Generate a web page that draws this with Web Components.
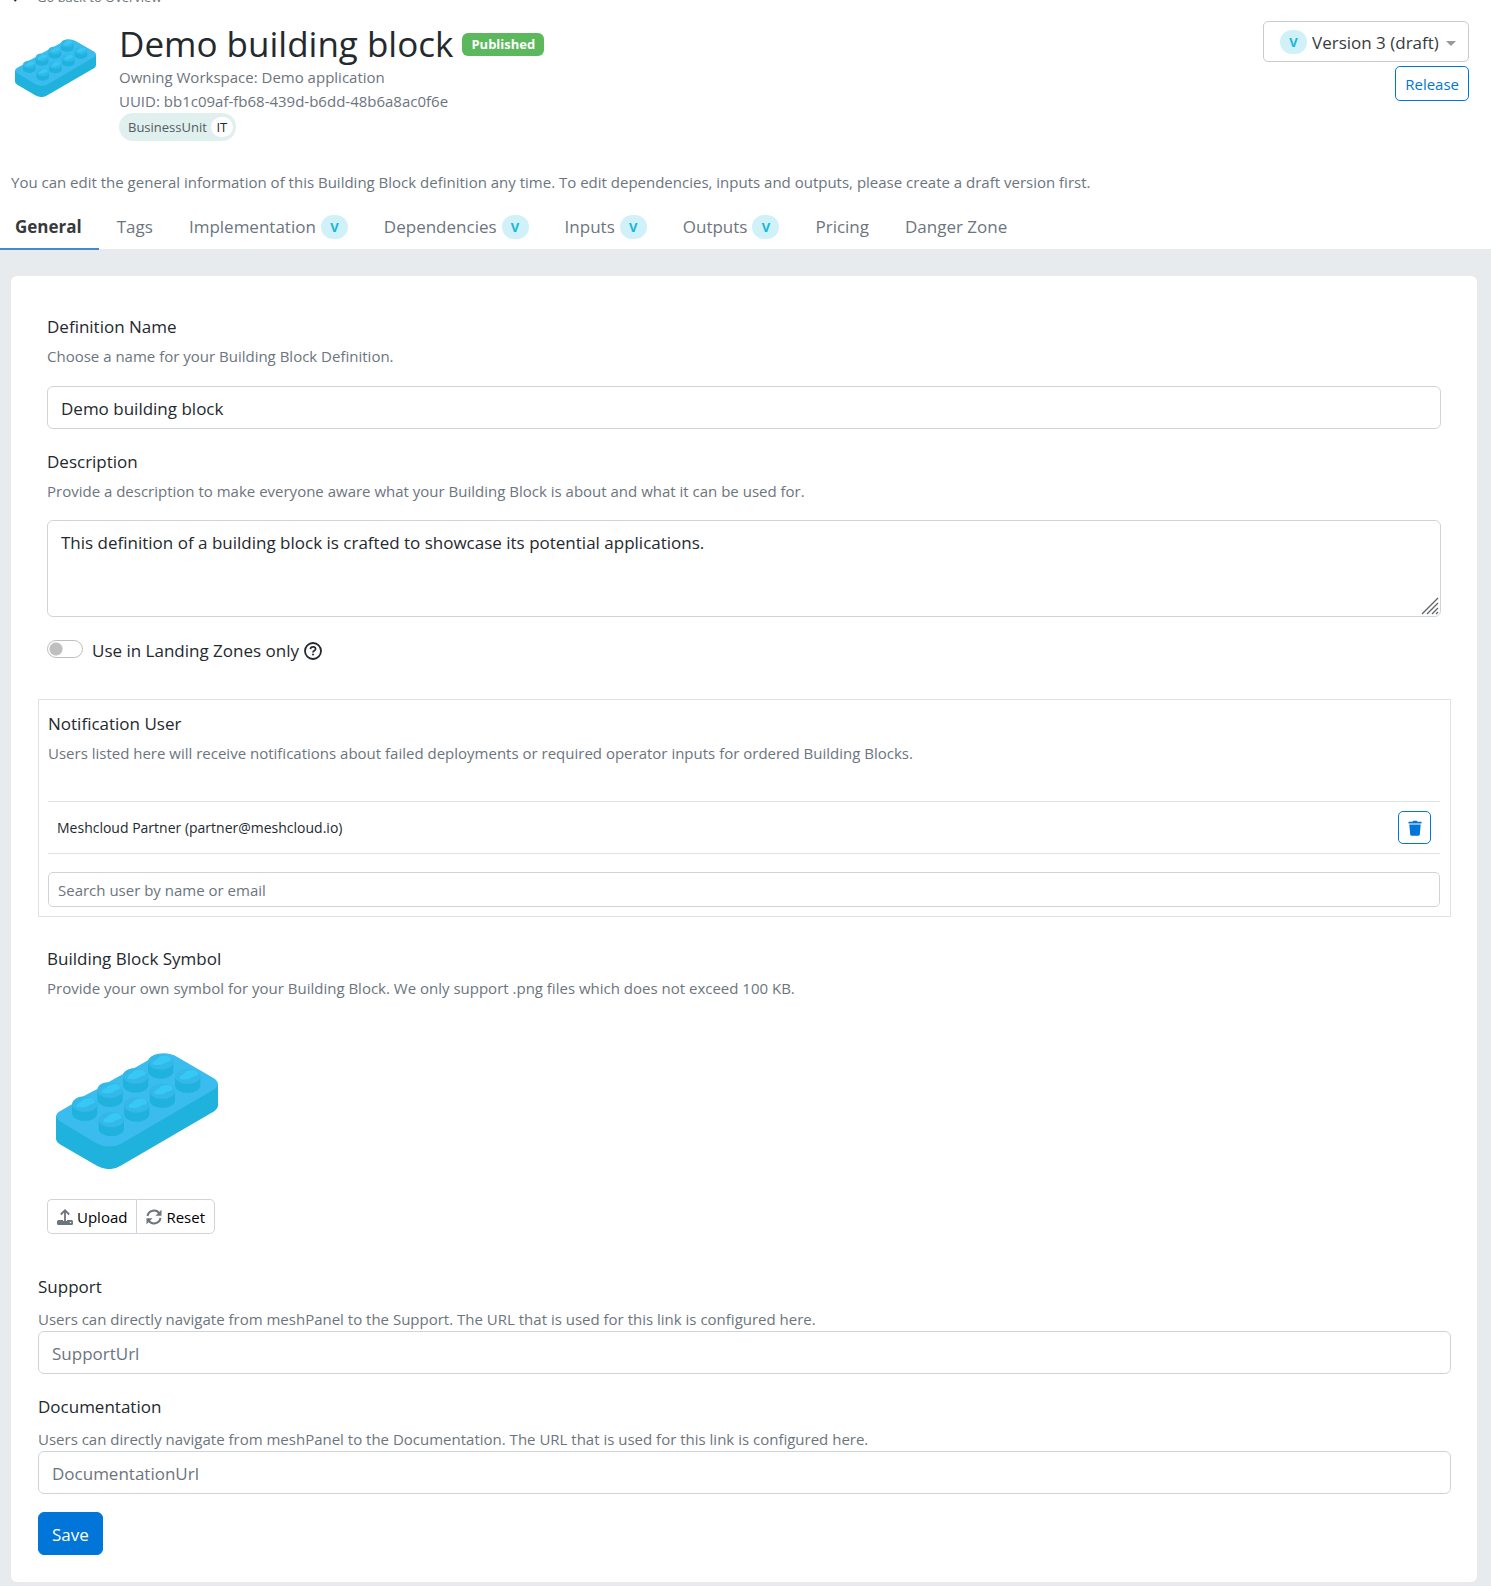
<!DOCTYPE html>
<html lang="en">
<head>
<meta charset="utf-8">
<title>Demo building block</title>
<style>
  html { background: #e7ebee; }
  body {
    margin: 0;
    font: 15px/24px "Open Sans", "Noto Sans", sans-serif;
    color: #24292e;
    overflow-x: hidden;
  }
</style>
</head>
<body>
<building-block-page></building-block-page>

<script>
const base = `
  *, *::before, *::after { box-sizing: border-box; }
  :host { display: block; }
  button, input, textarea, select { font: inherit; color: inherit; margin: 0; }
  h1, h2, p { margin: 0; font-weight: 400; }
  svg { display: block; }
`;

function define(name, render) {
  customElements.define(name, class extends HTMLElement {
    connectedCallback() {
      if (this.shadowRoot) return;
      const root = this.attachShadow({ mode: "open" });
      const tpl = document.createElement("template");
      tpl.innerHTML = render(this);
      root.append(tpl.content.cloneNode(true));
    }
  });
}
const attr = (el, n) => el.getAttribute(n) || "";

/* Building block symbol */
define("brick-symbol", () => {
  const studs = [[482,397],[407,439],[563,440],[330,482],[487,485],[254,524],[410,526],[334,570]];
  const stud = ([x, y]) => `
    <path fill="#1fb2dc" d="M${x-38} ${y}v27a38 23 0 0 0 76 0v-27z"/>
    <ellipse fill="#34b8e9" cx="${x}" cy="${y}" rx="38" ry="23"/>
    <path fill="#35c9f3" d="M${x-24} ${y+5}c-1-9 10-9 15-16 6-8 20-10 30-7 5 2 8 5 10 9 1 6-8 8-14 10-8 3-13 9-24 8-8-1-16 2-17-4z"/>`;
  return `<style>${base} svg { width: 100%; height: auto; }</style>
  <svg viewBox="168 370 486 349" aria-hidden="true">
    <path fill="#1fb2dc" d="M168 558V627Q168 636 182 645L292 709Q330 728 362 708L644 544Q654 536 654 528V462L330 600Z"/>
    <path fill="#3abdee" d="M182 543L217 523Q220 503 250 500L292 478Q296 459 326 457L368 434Q378 417 402 416L444 392Q456 371 490 371Q514 371 532 382L644 447Q664 462 644 478L362 643Q328 659 292 642L182 576Q155 558 182 543Z"/>
    ${studs.map(stud).join("")}
  </svg>`;
});

/* Round marker for versioned content */
define("version-mark", () => `<style>${base}
  :host { display: inline-flex; align-items: center; justify-content: center;
    width: 27px; height: 24px; border-radius: 12px; background: #d0f1f8;
    color: #17b6dc; font-size: 13px; line-height: 24px; font-weight: 700; flex: none; }
</style><span>V</span>`);

define("status-badge", () => `<style>${base}
  :host { background: #5cb85c; color: #fff; border-radius: 6px; padding: 0 9px;
    font-size: 13px; line-height: 23px; font-weight: 700; }
</style><slot></slot>`);

define("tag-pill", el => `<style>${base}
  :host { display: inline-flex; align-items: center; gap: 4px; height: 28px; padding: 0 3px 0 9px;
    border-radius: 14px; background: #dff0ee; color: #555b60; font-size: 13px; line-height: 20px; }
  b { font-weight: 400; color: #24292e; background: #fff; border-radius: 10px; min-width: 22px; text-align: center; }
</style><span>${attr(el, "name")}</span><b><slot></slot></b>`);

define("app-button", el => `<style>${base}
  :host { display: inline-block; }
  button { display: flex; align-items: center; gap: 4px; height: 35px; padding: 0 9px;
    border: 1px solid #0275d8; border-radius: 5px; background: #fff; color: #0275d8;
    font-size: 15px; line-height: 24px; white-space: nowrap; cursor: pointer; }
  :host([kind="primary"]) button { height: 43px; padding: 2px 13px 0; border-radius: 6px;
    background: #0275d8; color: #fff; font-size: 17px; }
  :host([kind="icon"]) button { width: 33px; height: 33px; padding: 0; justify-content: center; }
  :host([kind="start"]) button, :host([kind="end"]) button { border-color: #ced4da; color: #000; }
  :host([kind="start"]) button { border-radius: 5px 0 0 5px; border-right: 0; }
  :host([kind="end"]) button { border-radius: 0 5px 5px 0; }
</style>
<button type="button"${attr(el, "label") ? ` aria-label="${attr(el, "label")}"` : ""}><slot></slot></button>`);

define("version-select", () => `<style>${base}
  :host { display: flex; align-items: center; width: 206px; height: 41px; padding: 0 12px 0 16px;
    border: 1px solid #c9cbcd; border-radius: 5px; background: #fff; color: #373a3c; }
  select { appearance: none; flex: 1; min-width: 0; border: 0; background: none; outline: 0;
    padding: 2px 0 0 5px; font-size: 17px; line-height: 28px; height: 30px; }
  svg { margin-top: 4px; }
</style>
<version-mark></version-mark>
<select aria-label="Version"><option>Version 3 (draft)</option></select>
<svg width="10" height="5" viewBox="0 0 10 5"><path fill="#999" d="M0 0h10L5 5z"/></svg>`);

define("page-header", () => `<style>${base}
  :host { background: #fff; color: #6c757d; }
  .back { display: flex; align-items: center; gap: 19px; margin-top: -15px; padding-left: 10px;
    color: inherit; text-decoration: none; font-size: 13px; }
  .row { display: flex; align-items: flex-start; padding: 12px 22px 0 15px; }
  brick-symbol { width: 81px; margin: 18px 23px 0 0; flex: none; }
  .info { flex: 1; min-width: 0; }
  .title { display: flex; align-items: center; gap: 9px; height: 44px; padding-top: 2px; }
  h1 { font-size: 35px; line-height: 44px; color: #24292e; }
  .actions { display: flex; flex-direction: column; align-items: flex-end; gap: 4px; }
  tag-pill { vertical-align: top; }
  .note { padding: 29px 11px 0; }
</style>
<a class="back" href="#overview">
  <svg width="8" height="10" viewBox="0 0 8 10"><path d="M6 1L2 5l4 4" fill="none" stroke="#24292e" stroke-width="2"/></svg>
  <span>Go back to Overview</span></a>
<div class="row">
  <brick-symbol></brick-symbol>
  <div class="info">
    <div class="title"><h1>Demo building block</h1><status-badge>Published</status-badge></div>
    <p>Owning Workspace: Demo application</p>
    <p>UUID: bb1c09af-fb68-439d-b6dd-48b6a8ac0f6e</p>
    <tag-pill name="BusinessUnit">IT</tag-pill>
  </div>
  <div class="actions"><version-select></version-select><app-button>Release</app-button></div>
</div>
<p class="note">You can edit the general information of this Building Block definition any time. To edit dependencies, inputs and outputs, please create a draft version first.</p>`);

define("tab-link", el => `<style>${base}
  a { display: flex; align-items: center; gap: 5px; height: 37px; padding: 0 18px 9px;
    font-size: 17px; line-height: 28px; color: #6c757d; text-decoration: none; white-space: nowrap; }
  :host([active]) a { padding: 0 17px 7px 15px; font-weight: 700; color: #373a3c;
    border-bottom: 2px solid #428bca; }
</style>
<a href="#${attr(el, "to")}"${el.hasAttribute("active") ? ' aria-current="page"' : ""}><slot></slot>${el.hasAttribute("versioned") ? "<version-mark></version-mark>" : ""}</a>`);

define("tab-bar", () => `<style>${base}
  :host { background: #fff; padding-top: 19px; height: 55px; }
  nav { display: flex; }
</style><nav><slot></slot></nav>`);

/* Label, hint and a text control */
define("form-field", el => {
  const area = el.hasAttribute("multiline");
  const hint = attr(el, "hint");
  return `<style>${base}
  label { display: block; font-size: 17px; line-height: 30px; }
  p { color: #6c757d; margin: 2px 0 18px; }
  :host([multiline]) p { margin-bottom: 17px; }
  :host([tight]) p { margin: 5px 0 0; }
  input, textarea { display: block; width: 100%; border: 1px solid #ced4da; border-radius: 6px; background: #fff;
    padding: 2px 13px 0; font-size: 17px; line-height: 28px; outline: 0; }
  input { height: 43px; }
  ::placeholder { color: #6c757d; opacity: 1; }
  .area { display: grid; position: relative; }
  textarea { height: 97px; padding-top: 8px; resize: none; }
  .grip { position: absolute; right: 2px; bottom: 2px; }
</style>
<label for="c">${attr(el, "label")}</label>
<p id="h">${hint}</p>
${area
  ? `<div class="area"><textarea id="c" aria-describedby="h">${attr(el, "value")}</textarea>
     <svg class="grip" width="18" height="18" viewBox="0 0 18 18"><path d="M1 17L17 1M6 17L17 6M11 17l6-6M15 17l2-2" stroke="#5f6368" stroke-width="1.3"/></svg></div>`
  : `<input id="c" type="text" aria-describedby="h" value="${attr(el, "value")}" placeholder="${attr(el, "placeholder")}">`}`;
});

define("toggle-switch", () => `<style>${base}
  :host { display: flex; align-items: center; gap: 5px; font-size: 17px; line-height: 28px; }
  label { display: flex; align-items: center; gap: 9px; }
  input { appearance: none; width: 36px; height: 18px; margin: 0 0 4px; border: 1px solid #bfbfbf; border-radius: 9px;
    background: radial-gradient(circle at 8px 8px, #bfbfbf 6px, transparent 7px) #fff; }
</style>
<label><input type="checkbox" role="switch"><span><slot></slot></span></label>
<svg width="18" height="18" viewBox="0 0 18 18"><circle cx="9" cy="9" r="8" fill="none" stroke="#24292e" stroke-width="1.8"/>
<path d="M6.4 7.1c.1-1.500 1.100-2.200 2.600-2.200 1.500 0 2.600.8 2.600 2.100 0 1.900-2.600 1.700-2.600 3.400" fill="none" stroke="#24292e" stroke-width="1.700"/><rect x="8" y="11.600" width="2" height="2" rx="1" fill="#24292e"/></svg>`);

define("notification-users", () => `<style>${base}
  :host { border: 1px solid #dee2e6; padding: 9px 10px 9px 9px; }
  h2 { font-size: 17px; line-height: 30px; }
  p { color: #6c757d; margin: 2px 0 36px; }
  .user { display: flex; align-items: center; justify-content: space-between; padding: 9px;
    border: solid #dee2e6; border-width: 1px 0; font-size: 14px; margin-bottom: 18px; }
  input { display: block; width: 100%; height: 35px; padding: 0 9px; border: 1px solid #ced4da;
    border-radius: 5px; background: #fff; outline: 0; }
  ::placeholder { color: #6c757d; opacity: 1; }
</style>
<h2>Notification User</h2>
<p>Users listed here will receive notifications about failed deployments or required operator inputs for ordered Building Blocks.</p>
<div class="user"><span>Meshcloud Partner (partner@meshcloud.io)</span>
  <app-button kind="icon" label="Remove user"><svg width="14" height="16" viewBox="0 0 14 16"><path fill="#0275d8" d="M.5 1.800h4L5.200.800h3.600l.7 1h4v1.600H.5zM1.300 4.400h11.400l-.9 10.200q-.1 1.100-1.200 1.100H3.400q-1.100 0-1.200-1.100z"/></svg></app-button></div>
<input type="search" aria-label="Search user" placeholder="Search user by name or email">`);

define("symbol-upload", () => `<style>${base}
  h2 { font-size: 17px; line-height: 30px; }
  p { color: #6c757d; margin: 2px 0 53px; }
  brick-symbol { width: 162px; margin: 0 0 30px 9px; }
  .group { display: flex; }
</style>
<h2>Building Block Symbol</h2>
<p>Provide your own symbol for your Building Block. We only support .png files which does not exceed 100 KB.</p>
<brick-symbol></brick-symbol>
<div class="group">
  <app-button kind="start"><svg width="16" height="16" viewBox="0 0 16 16"><rect x="0" y="11" width="16" height="5" rx="1.500" fill="#6c757d"/><path d="M8 12V2M4 5.500L8 1.500l4 4" fill="none" stroke="#fff" stroke-width="4"/><path d="M8 12V1.500M3.800 5.500L8 1.300l4.200 4.200" fill="none" stroke="#6c757d" stroke-width="1.800"/><circle cx="13.500" cy="13.500" r=".8" fill="#fff"/></svg>Upload</app-button>
  <app-button kind="end"><svg width="16" height="16" viewBox="0 0 16 16"><path d="M1.500 7A6.600 6.600 0 0 1 13.500 4.600M14.500 9A6.600 6.600 0 0 1 2.500 11.400" fill="none" stroke="#6c757d" stroke-width="2"/><path fill="#6c757d" d="M15.500.8v6H9.500zM.5 15.200v-6h6z"/></svg>Reset</app-button>
</div>`);

define("content-card", () => `<style>${base}
  :host { background: #fff; border-radius: 6px; margin: 27px 14px 4px 11px; padding: 36px 26px 27px 27px; }
</style><slot></slot>`);

define("building-block-page", () => `<style>${base}
  .inset { padding: 0 10px 0 9px; }
  .stack { display: flex; flex-direction: column; gap: 18px; }
  toggle-switch { margin-top: 2px; }
  notification-users { margin: 34px 0 27px; }
  .links { margin-top: 38px; }
  content-card { display: flow-root; }
</style>
<page-header></page-header>
<tab-bar>
  <tab-link to="general" active>General</tab-link>
  <tab-link to="tags">Tags</tab-link>
  <tab-link to="implementation" versioned>Implementation</tab-link>
  <tab-link to="dependencies" versioned>Dependencies</tab-link>
  <tab-link to="inputs" versioned>Inputs</tab-link>
  <tab-link to="outputs" versioned>Outputs</tab-link>
  <tab-link to="pricing">Pricing</tab-link>
  <tab-link to="danger">Danger Zone</tab-link>
</tab-bar>
<content-card>
  <form>
    <div class="inset stack">
      <form-field label="Definition Name" hint="Choose a name for your Building Block Definition." value="Demo building block"></form-field>
      <form-field multiline label="Description" hint="Provide a description to make everyone aware what your Building Block is about and what it can be used for." value="This definition of a building block is crafted to showcase its potential applications."></form-field>
      <toggle-switch>Use in Landing Zones only</toggle-switch>
    </div>
    <notification-users></notification-users>
    <div class="inset"><symbol-upload></symbol-upload></div>
    <div class="links stack">
      <form-field tight label="Support" hint="Users can directly navigate from meshPanel to the Support. The URL that is used for this link is configured here." placeholder="SupportUrl"></form-field>
      <form-field tight label="Documentation" hint="Users can directly navigate from meshPanel to the Documentation. The URL that is used for this link is configured here." placeholder="DocumentationUrl"></form-field>
      <app-button kind="primary">Save</app-button>
    </div>
  </form>
</content-card>`);
</script>
</body>
</html>
